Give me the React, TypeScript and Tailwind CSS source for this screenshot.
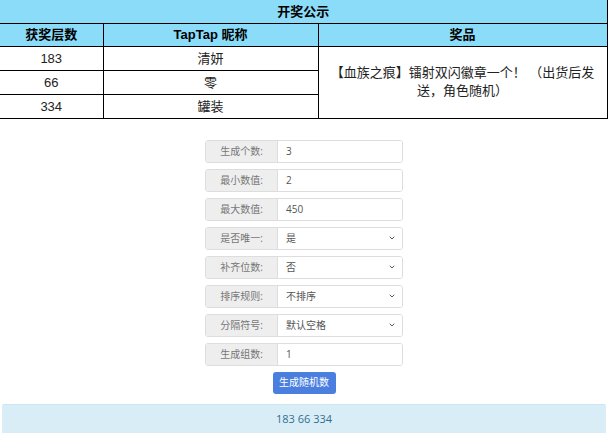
import { ChevronDown } from 'lucide-react';

const winners = [
  { floor: '183', name: '清妍' },
  { floor: '66', name: '零' },
  { floor: '334', name: '罐装' },
];

const fields: { label: string; value: string; select?: boolean }[] = [
  { label: '生成个数:', value: '3' },
  { label: '最小数值:', value: '2' },
  { label: '最大数值:', value: '450' },
  { label: '是否唯一:', value: '是', select: true },
  { label: '补齐位数:', value: '否', select: true },
  { label: '排序规则:', value: '不排序', select: true },
  { label: '分隔符号:', value: '默认空格', select: true },
  { label: '生成组数:', value: '1' },
];

const cjk = 'font-["Liberation_Sans","Noto_Sans_CJK_SC",sans-serif]';
const cell = 'border border-black text-center text-[13px] leading-none';

export default function App() {
  return (
    <div className={`w-[608px] h-[433px] overflow-hidden bg-white text-black ${cjk}`}>
      <table className="w-[607px] border-collapse table-fixed">
        <colgroup>
          <col className="w-[103px]" />
          <col className="w-[215px]" />
          <col className="w-[289px]" />
        </colgroup>
        <thead>
          <tr className="bg-[#8bdcf8]">
            <th colSpan={3} className={`${cell} h-[23px] border-l-0 border-t-0 font-semibold`}>开奖公示</th>
          </tr>
          <tr className="bg-[#8bdcf8]">
            <th className={`${cell} h-[23px] border-l-0 font-semibold`}>获奖层数</th>
            <th className={`${cell} h-[23px] font-semibold`}>TapTap 昵称</th>
            <th className={`${cell} h-[23px] font-semibold`}>奖品</th>
          </tr>
        </thead>
        <tbody>
          {winners.map((w, i) => (
            <tr key={w.floor}>
              <td className={`${cell} h-6 border-l-0 text-[#222]`}>{w.floor}</td>
              <td className={`${cell} h-6 text-[#222]`}>{w.name}</td>
              {i === 0 && (
                <td rowSpan={3} className="border border-black px-0.5 text-center text-[13px] leading-[18px] text-[#222]">
                  【血族之痕】镭射双闪徽章一个！ （出货后发送，角色随机）
                </td>
              )}
            </tr>
          ))}
        </tbody>
      </table>

      <div className={`mt-[21px] flex flex-col items-center gap-[6px] font-["Open_Sans","Noto_Sans_CJK_SC",sans-serif]`}>
        {fields.map((f) => (
          <div key={f.label} className="flex h-[23px] w-[198px] overflow-hidden rounded-[3px] border border-[#ddd] text-[10px]">
            <div className="flex w-[72px] items-center justify-center border-r border-[#ddd] bg-[#eee] text-[#777]">
              {f.label}
            </div>
            <div className="flex flex-1 items-center justify-between bg-white pl-2 pr-1.5 text-[#555]">
              <span>{f.value}</span>
              {f.select && <ChevronDown className="h-2 w-2 text-[#555]" strokeWidth={3} />}
            </div>
          </div>
        ))}
        <button className="h-[22px] w-[63px] rounded-[3px] bg-[#4a7fe0] text-[10px] text-white">
          生成随机数
        </button>
      </div>

      <div className="ml-[2px] mt-[10px] flex h-[31px] w-[604px] items-center justify-center rounded-t-[2px] border-t border-[#c9e6f1] bg-[#d9edf7] font-['Open_Sans',sans-serif] text-[11px] text-[#31708f]">
        183 66 334
      </div>
    </div>
  );
}
